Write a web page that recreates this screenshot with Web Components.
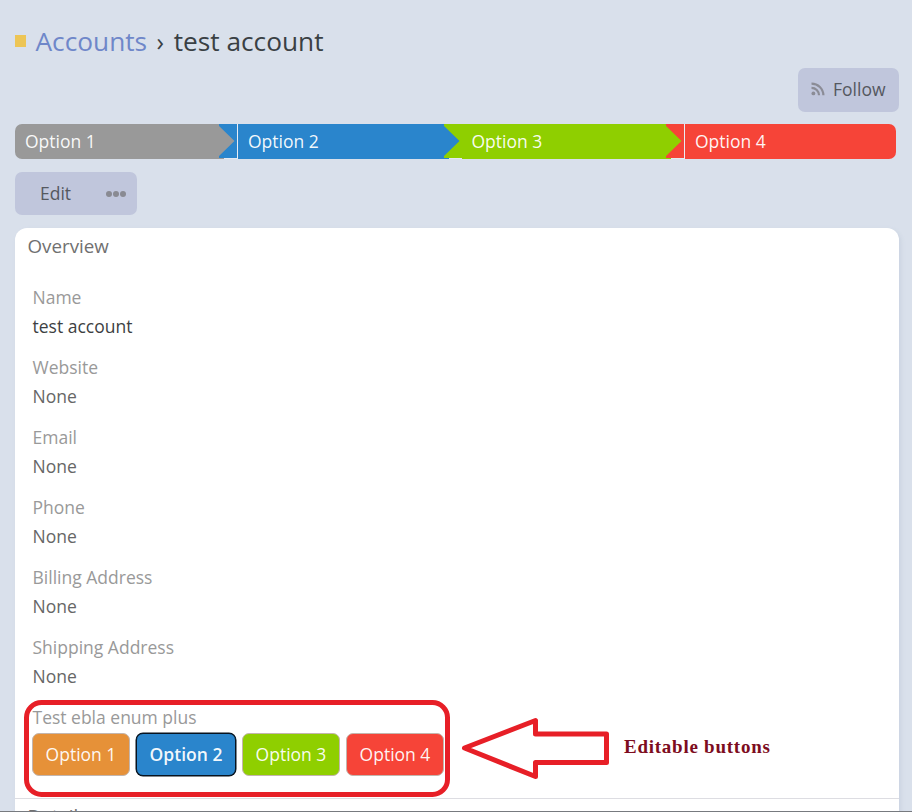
<!DOCTYPE html>
<html lang="en">
<head>
<meta charset="utf-8">
<title>test account</title>
<style>
html,body{margin:0;height:812px;overflow:hidden;background:#d9e0eb}
body{font-family:"Open Sans","Noto Sans",sans-serif;font-size:17.5px;line-height:25px;color:#666}
</style>
</head>
<body>
<account-page></account-page>
<script>
class Base extends HTMLElement {
  connectedCallback() {
    if (this.shadowRoot) return;
    this.attachShadow({mode: 'open'}).innerHTML = this.render();
  }
}
customElements.define('page-title', class extends Base {
  render() { return `<style>
    :host{display:flex;align-items:center;height:36px;font-size:26.25px;line-height:36px;color:#3a4044;white-space:pre}
    i{width:11px;height:12px;background:#edc555;margin-right:9.5px}
    a{color:#6f87c9}
    b{font-weight:400;font-size:25px;margin:0 9.5px 0 9.5px}
  </style><i></i><a>Accounts</a><b>›</b><slot></slot>`; }
});
customElements.define('action-button', class extends Base {
  render() { return `<style>
    :host{display:flex;align-items:center;box-sizing:border-box;height:43px;border-radius:7px;background:#c0c6dc;color:#55585f;white-space:nowrap}
  </style><slot></slot>`; }
});
customElements.define('feed-icon', class extends Base {
  render() { return `<style>:host{display:block;width:14px;height:14px;margin-right:8px}svg{display:block}</style>
  <svg width="14" height="14" viewBox="0 0 14 14" fill="none" stroke="#8b8c96" stroke-width="2.2"><circle cx="2.4" cy="11.4" r="1.9" fill="#8b8c96" stroke="none"/><path d="M.5 5.9a7.5 7.5 0 0 1 7.5 7.4M.5 1.7A11.8 11.8 0 0 1 12.400 13.3"/></svg>`; }
});
customElements.define('dots-icon', class extends Base {
  render() { return `<style>:host{display:block;width:20px;height:6px}svg{display:block}</style>
  <svg width="20" height="6" fill="#898a92"><circle cx="3" cy="3" r="3"/><circle cx="10" cy="3" r="3"/><circle cx="17" cy="3" r="3"/></svg>`; }
});
customElements.define('pipeline-step', class extends Base {
  render() {
    const next = this.getAttribute('next'), c = this.getAttribute('color'), gap = this.hasAttribute('divided');
    const tail = next ? `<svg width="19" height="35"><path fill="${next}" d="M0 0H19V34H0Z"/><path fill="#e4e9f2" d="M6 34H19V35H6Z"/><path fill="${c}" d="M0 34H6V35H0Z"/><path fill="${c}" d="M0 0H1V2L16.500 17L1 32V34H0Z"/></svg>` : '';
    return `<style>
    :host{display:flex;justify-content:space-between;box-sizing:border-box;height:35px;line-height:35px;color:#fffffff0;padding-left:10px;background:${c};${gap ? 'border-right:1px solid #e8edf5;' : ''}}
    svg{display:block}
    </style><slot></slot>${tail}`;
  }
});
customElements.define('status-pipeline', class extends Base {
  render() { return `<style>
    :host{display:grid;grid-template-columns:223px 223.500px 223.500px 211px;width:881px;height:35px;border-radius:7px;overflow:hidden}
  </style><slot></slot>`; }
});
customElements.define('record-field', class extends Base {
  render() { return `<style>
    :host{display:block;height:70px;line-height:29px}
    label{display:block;color:#999}
    div{color:#666}
    ::slotted(strong){font-weight:400;color:#3d3f42}
  </style><label>${this.getAttribute('label')}</label><div><slot></slot></div>`; }
});
customElements.define('option-button', class extends Base {
  render() {
    const on = this.hasAttribute('selected');
    return `<style>
    :host{display:flex;align-items:center;justify-content:center;box-sizing:border-box;width:${on ? 100 : 98}px;height:43px;border-radius:7px;border:${on ? '1px solid #07131f' : '1px solid #c3b5ad'};${on ? 'box-shadow:0 0 0 .5px #07131f;' : ''}background:${this.getAttribute('color')};color:#fffffff0;font-weight:${on ? 600 : 400};white-space:nowrap}
    </style><slot></slot>`;
  }
});
customElements.define('callout-marks', class extends Base {
  render() { return `<style>
    :host{position:absolute;left:0;top:690px;width:912px;height:122px}
    svg{position:absolute;left:0;top:0}
    span{position:absolute;left:624px;top:44px;font:bold 19px/26px "Liberation Serif",serif;letter-spacing:.75px;color:#7d0c20;white-space:nowrap}
  </style>
  <svg width="912" height="122" fill="none" stroke="#e71f27" stroke-width="5" stroke-linejoin="round"><rect x="26.5" y="12.5" width="421" height="92" rx="15"/><path d="M464.500 58L535.500 30.500V44H606.500V72.500H535.500V86.500Z"/></svg>
  <span>Editable buttons</span>`; }
});
customElements.define('account-page', class extends Base {
  render() { return `<style>
    :host{display:block;position:relative;box-sizing:border-box;height:812px;padding:23px 13px 0 15px;overflow:hidden}
    .follow{width:101px;height:44px;margin:9px 0 12px auto;padding:0 0 2px 13px}
    .edit{width:122px;margin:13px 0;padding:0 11px 0 25px;justify-content:space-between}
    main{box-sizing:border-box;height:620px;background:#fff;border-radius:12px;box-shadow:2px 2px 4px #aeb9cb55}
    h4{margin:0;padding:5px 12.500px 0;height:31px;box-sizing:border-box;font:400 18.75px/26px "Open Sans",sans-serif;color:#707070}
    .fields{padding:24px 17.500px 0;height:515px}
    .options{display:flex;align-items:center;gap:6px;width:max-content;margin-left:-.5px;padding-top:.5px}
    .details{border-top:1px solid #dddde2;padding-top:4px}
    footer{position:absolute;left:0;right:0;bottom:0;height:1px;background:#777a7f}
  </style>
  <page-title>test account</page-title>
  <action-button class="follow"><feed-icon></feed-icon>Follow</action-button>
  <status-pipeline>
    <pipeline-step color="#999999" next="#2a85cc" divided>Option 1</pipeline-step>
    <pipeline-step color="#2a85cc" next="#8fcf00">Option 2</pipeline-step>
    <pipeline-step color="#8fcf00" next="#f64438" divided>Option 3</pipeline-step>
    <pipeline-step color="#f64438">Option 4</pipeline-step>
  </status-pipeline>
  <action-button class="edit"><span>Edit</span><dots-icon></dots-icon></action-button>
  <main>
    <h4>Overview</h4>
    <div class="fields">
      <record-field label="Name"><strong>test account</strong></record-field>
      <record-field label="Website">None</record-field>
      <record-field label="Email">None</record-field>
      <record-field label="Phone">None</record-field>
      <record-field label="Billing Address">None</record-field>
      <record-field label="Shipping Address">None</record-field>
      <record-field label="Test ebla enum plus"><div class="options">
        <option-button color="#e69138">Option 1</option-button>
        <option-button color="#2a85cc" selected>Option 2</option-button>
        <option-button color="#8fcf00">Option 3</option-button>
        <option-button color="#f64438">Option 4</option-button>
      </div></record-field>
    </div>
    <h4 class="details">Details</h4>
  </main>
  <callout-marks></callout-marks>
  <footer></footer>`; }
});
</script>
</body>
</html>
